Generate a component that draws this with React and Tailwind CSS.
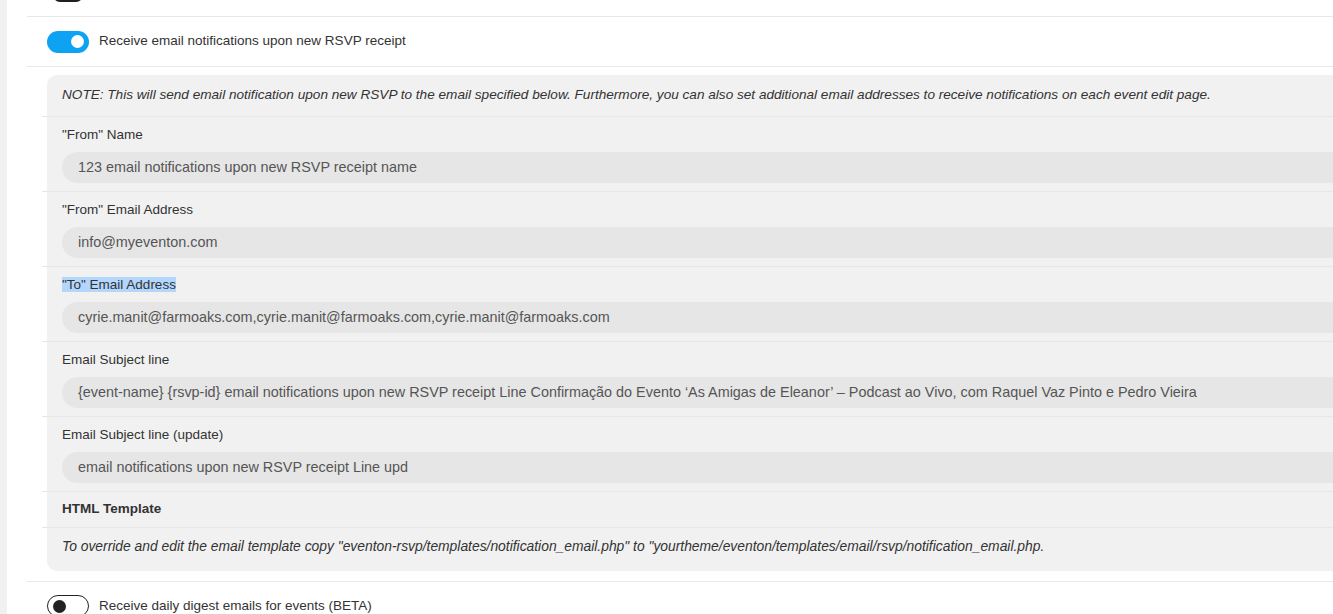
import React from "react";

const font = { fontFamily: '"Liberation Sans", Arial, sans-serif' };

function Toggle({ on }) {
  if (on) {
    return (
      <div className="w-[42px] h-[22px] rounded-full bg-[#0ea2f2] flex items-center justify-end pr-[5px] shrink-0">
        <div className="w-[13px] h-[13px] rounded-full bg-white" />
      </div>
    );
  }
  return (
    <div className="w-[42px] h-[22px] rounded-full border border-[#222] bg-white flex items-center pl-[5px] shrink-0">
      <div className="w-[13px] h-[13px] rounded-full bg-[#222]" />
    </div>
  );
}

function Field({ label, value, selected }) {
  return (
    <div className="-ml-[5px] pl-[20px] border-t border-[#e6e6e6] pt-[10px] pb-[8px]">
      <div className="text-[13.5px] leading-[16px] text-[#333]">
        {selected ? <span className="bg-[#b3d6fd]">{label}</span> : label}
      </div>
      <div className="mt-[9px] h-[31px] rounded-l-full bg-[#e6e6e6] flex items-center pl-[16px] text-[14.4px] text-[#555] whitespace-nowrap">
        {value}
      </div>
    </div>
  );
}

export default function App() {
  return (
    <div className="w-[1333px] h-[614px] overflow-hidden flex bg-white" style={font}>
      <div className="w-[7px] shrink-0 bg-[#f1f1f1]" />
      <div className="flex-1 pl-[20px] min-w-0">
        {/* tail of the setting above */}
        <div className="h-[17px] border-b border-[#e8e8e8] overflow-hidden">
          <div className="ml-[26px] -mt-[18px] w-[30px] h-[20px] rounded-[7px] bg-[#1f1f1f]" />
        </div>

        <div className="h-[50px] border-b border-[#e8e8e8] flex items-center pl-[20px] gap-[10px]">
          <Toggle on />
          <span className="text-[13.5px] text-[#333]">Receive email notifications upon new RSVP receipt</span>
        </div>

        <div className="pt-[8px] pb-[10px] pl-[20px] border-b border-[#e8e8e8]">
          <div className="bg-[#f1f1f1] rounded-l-[10px] w-[1400px]">
            <div className="px-[15px] pt-[12px] pb-[13px] text-[13.6px] leading-[16px] italic text-[#333] whitespace-nowrap">
              NOTE: This will send email notification upon new RSVP to the email specified below. Furthermore, you can also set additional email addresses to receive notifications on each event edit page.
            </div>
            <Field label={'"From" Name'} value="123 email notifications upon new RSVP receipt name" />
            <Field label={'"From" Email Address'} value="info@myeventon.com" />
            <Field
              label={'"To" Email Address'}
              value="cyrie.manit@farmoaks.com,cyrie.manit@farmoaks.com,cyrie.manit@farmoaks.com"
              selected
            />
            <Field
              label="Email Subject line"
              value="{event-name} {rsvp-id} email notifications upon new RSVP receipt Line Confirmação do Evento ‘As Amigas de Eleanor’ – Podcast ao Vivo, com Raquel Vaz Pinto e Pedro Vieira"
            />
            <Field label="Email Subject line (update)" value="email notifications upon new RSVP receipt Line upd" />
            <div className="-ml-[5px] pl-[20px] border-t border-[#e6e6e6] h-[36px] flex items-center text-[13.5px] font-bold text-[#333]">
              HTML Template
            </div>
            <div className="-ml-[5px] pl-[20px] border-t border-[#e6e6e6] pt-[10px] pb-[17px] text-[13.85px] leading-[16px] italic text-[#333] whitespace-nowrap">
              To override and edit the email template copy "eventon-rsvp/templates/notification_email.php" to "yourtheme/eventon/templates/email/rsvp/notification_email.php.
            </div>
          </div>
        </div>

        <div className="pt-[13px] pl-[20px] flex items-center gap-[10px]">
          <Toggle on={false} />
          <span className="text-[13.5px] text-[#333]">Receive daily digest emails for events (BETA)</span>
        </div>
      </div>
    </div>
  );
}
